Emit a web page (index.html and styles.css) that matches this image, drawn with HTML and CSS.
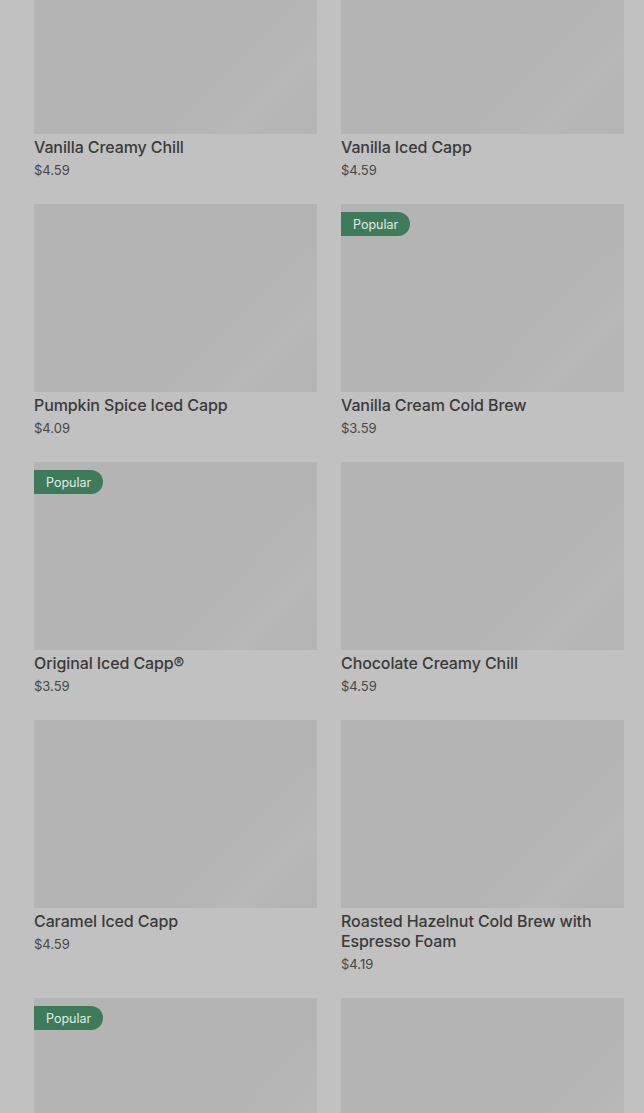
FILE: index.html
```html
<!DOCTYPE html>
<html lang="en">
<head>
<meta charset="utf-8">
<title>Menu</title>
<link rel="stylesheet" href="styles.css">
</head>
<body>
<main class="page">
  <ul class="grid">
    <li class="card"><div class="thumb"></div><h3 class="name">Vanilla Creamy Chill</h3><p class="price">$4.59</p></li>
    <li class="card"><div class="thumb"></div><h3 class="name">Vanilla Iced Capp</h3><p class="price">$4.59</p></li>
    <li class="card"><div class="thumb"></div><h3 class="name">Pumpkin Spice Iced Capp</h3><p class="price">$4.09</p></li>
    <li class="card"><div class="thumb"><span class="badge">Popular</span></div><h3 class="name">Vanilla Cream Cold Brew</h3><p class="price">$3.59</p></li>
    <li class="card"><div class="thumb"><span class="badge">Popular</span></div><h3 class="name">Original Iced Capp®</h3><p class="price">$3.59</p></li>
    <li class="card"><div class="thumb"></div><h3 class="name">Chocolate Creamy Chill</h3><p class="price">$4.59</p></li>
    <li class="card"><div class="thumb"></div><h3 class="name">Caramel Iced Capp</h3><p class="price">$4.59</p></li>
    <li class="card"><div class="thumb"></div><h3 class="name">Roasted Hazelnut Cold Brew with Espresso Foam</h3><p class="price">$4.19</p></li>
    <li class="card"><div class="thumb"><span class="badge">Popular</span></div></li>
    <li class="card"><div class="thumb"></div></li>
  </ul>
</main>
</body>
</html>
```
FILE: styles.css
```css
html, body {
  margin: 0;
  padding: 0;
  background: #c1c1c1;
  overflow: hidden;
}
body {
  font-family: Inter, Roboto, "Liberation Sans", Arial, sans-serif;
  color: #3a3a3a;
}
.page {
  padding: 0 20px 0 34px;
}
.grid {
  list-style: none;
  margin: -54px 0 0 0;
  padding: 0;
  display: grid;
  grid-template-columns: 283px 283px;
  column-gap: 24px;
  row-gap: 24px;
  align-items: start;
}
.card {
  display: flex;
  flex-direction: column;
}
.thumb {
  position: relative;
  height: 188px;
  background: linear-gradient(135deg, #b4b4b4 0%, #b4b4b4 68%, #b8b8b8 82%, #b5b5b5 92%, #b4b4b4 100%);
}
.badge {
  position: absolute;
  left: 0;
  top: 8px;
  height: 24px;
  padding: 0 12px;
  display: flex;
  align-items: center;
  background: #3e7b5b;
  color: #e2ece6;
  font-size: 12.5px;
  border-radius: 0 12px 12px 0;
}
.name {
  margin: 3px 0 0 0;
  font-size: 16px;
  line-height: 20px;
  font-weight: 500;
  letter-spacing: -0.1px;
  color: #3a3a3a;
}
.price {
  margin: 4px 0 0 0;
  font-size: 13px;
  line-height: 19px;
  color: #474747;
}
```
